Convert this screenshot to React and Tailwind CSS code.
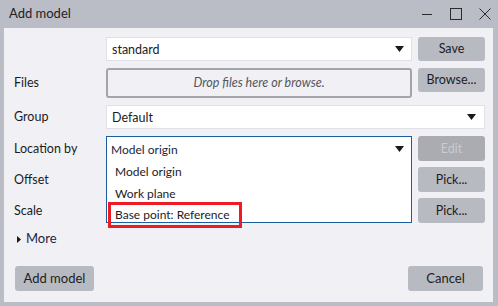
import React from 'react';

const Arrow = () => (
  <svg width="9" height="6" viewBox="0 0 9 6" className="shrink-0">
    <path d="M0 0 H9 L4.5 6 Z" fill="#1a1a1a" />
  </svg>
);

const Btn = ({ children, className = '' }) => (
  <div className={`flex items-center justify-center pt-[1px] rounded-[3px] bg-[#b8bac2] text-[#1c1c24] ${className}`}>
    {children}
  </div>
);

const App = () => {
  return (
    <div
      className="w-[498px] h-[306px] bg-[#babdc5] flex flex-col text-[12px] text-[#1c1c1c]"
      style={{ fontFamily: 'Lato, "Open Sans", sans-serif' }}
    >
      {/* title bar */}
      <div className="h-[28px] flex items-center pl-[9px]">
        <span className="text-[13px] text-[#222]">Add model</span>
        <div className="ml-auto mr-[7px] flex items-center gap-[17px]">
          <svg width="12" height="12" viewBox="0 0 12 12">
            <path d="M1 6.5 H11" stroke="#2a2a2a" strokeWidth="1" />
          </svg>
          <svg width="12" height="12" viewBox="0 0 12 12">
            <rect x="0.5" y="0.5" width="11" height="11" fill="none" stroke="#2a2a2a" strokeWidth="1" />
          </svg>
          <svg width="12" height="12" viewBox="0 0 12 12">
            <path d="M0.5 0.5 L11.5 11.5 M11.5 0.5 L0.5 11.5" stroke="#2a2a2a" strokeWidth="1" />
          </svg>
        </div>
      </div>

      {/* body */}
      <div className="relative flex-1 ml-[4px] mr-[5px] mb-[4px] bg-[#f0f0f5] flex flex-col pt-[9px]">
        {/* preset row */}
        <div className="flex items-start">
          <div className="w-[102px]" />
          <div className="w-[306px] h-[24px] bg-white border border-[#e0e0e6] flex items-center pl-[5px] pr-[7px]">
            <span className="pt-[2px] text-[12.5px]">standard</span>
            <span className="ml-auto"><Arrow /></span>
          </div>
          <Btn className="ml-[6px] w-[67px] h-[24px] text-[12.5px]">Save</Btn>
        </div>

        {/* files row */}
        <div className="flex items-start mt-[7px]">
          <div className="w-[102px] h-[30px] pl-[10px] flex items-center text-[12.5px]">Files</div>
          <div className="w-[306px] h-[30px] border-2 border-[#a3a5ab] rounded-[3px] flex items-center justify-center pt-[1px] italic text-[12.5px] text-[#55565c]">
            Drop files here or browse.
          </div>
          <Btn className="ml-[6px] w-[67px] h-[24px] text-[12.5px]">Browse...</Btn>
        </div>

        {/* group row */}
        <div className="flex items-center mt-[7px]">
          <div className="w-[102px] pl-[10px] pt-[1px] text-[12.5px]">Group</div>
          <div className="w-[379px] h-[24px] bg-white border border-[#e0e0e6] flex items-center pl-[5px] pr-[8px]">
            <span className="pt-[2px] text-[12.5px]">Default</span>
            <span className="ml-auto"><Arrow /></span>
          </div>
        </div>

        {/* location rows */}
        <div className="flex items-start mt-[7px]">
          <div className="w-[102px] pl-[10px] flex flex-col gap-[6px] text-[12.5px]">
            <div className="h-[25px] pt-[2px] flex items-center">Location by</div>
            <div className="h-[25px] pt-[1px] flex items-center">Offset</div>
            <div className="h-[25px] pt-[1px] flex items-center">Scale</div>
          </div>
          <div className="w-[306px] h-[87px] overflow-hidden bg-white border border-[#1b5e9e] flex flex-col">
            <div className="h-[24px] shrink-0 flex items-center pl-[4px] pr-[7px] text-[#1d2640]">
              <span className="pt-[2px]">Model origin</span>
              <span className="ml-auto"><Arrow /></span>
            </div>
            <div className="h-[22px] shrink-0 flex items-center pl-[8px]">Model origin</div>
            <div className="h-[21px] shrink-0 flex items-center pl-[8px]">Work plane</div>
            <div className="h-[21px] shrink-0 flex items-center pl-[8px]">Base point: Reference</div>
          </div>
          <div className="ml-[6px] flex flex-col gap-[6px] text-[12.5px]">
            <div className="w-[67px] h-[25px] pt-[1px] rounded-[3px] bg-[#abacb1] text-[#c9cacf] flex items-center justify-center">Edit</div>
            <Btn className="w-[67px] h-[25px]">Pick...</Btn>
            <Btn className="w-[67px] h-[25px]">Pick...</Btn>
          </div>
        </div>

        {/* more */}
        <div className="flex items-center mt-[8px] h-[16px] pl-[13px] text-[#1d2640]">
          <svg width="4" height="7" viewBox="0 0 4 7" className="mr-[5px]">
            <path d="M0 0 L4 3.5 L0 7 Z" fill="#1a1a1a" />
          </svg>
          <span className="text-[13px]">More</span>
        </div>

        {/* bottom buttons */}
        <div className="flex items-center mt-auto mb-[11px] pl-[11px] pr-[10px]">
          <Btn className="w-[79px] h-[25px] text-[13px]">Add model</Btn>
          <Btn className="ml-auto w-[75px] h-[25px] text-[13px]">Cancel</Btn>
        </div>

        {/* annotation box */}
        <div className="absolute left-[104px] top-[174px] w-[134px] h-[26px] border-[3px] border-[#ed1c24]" />
      </div>
    </div>
  );
};

export default App;
